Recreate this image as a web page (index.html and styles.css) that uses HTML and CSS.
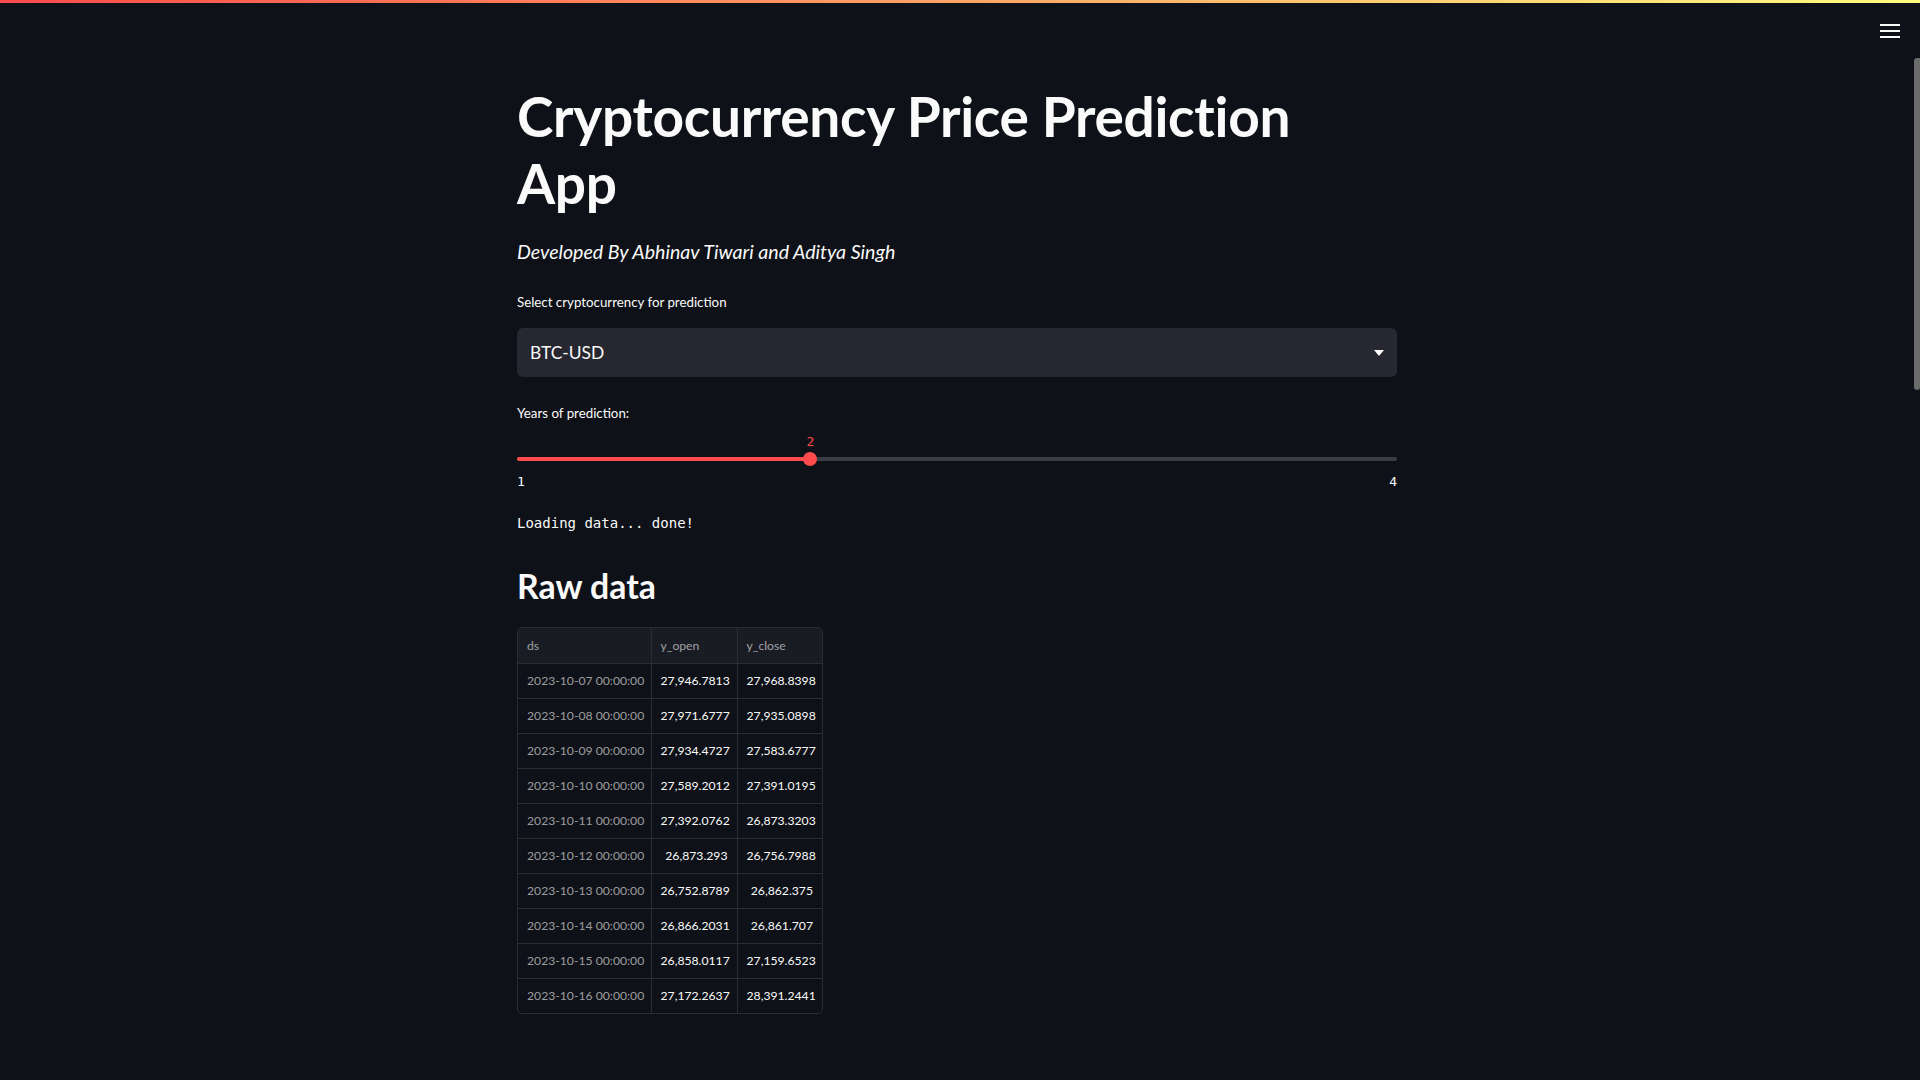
FILE: index.html
```html
<!DOCTYPE html>
<html lang="en">
<head>
<meta charset="utf-8">
<title>Cryptocurrency Price Prediction App</title>
<link rel="stylesheet" href="styles.css">
</head>
<body>
<div class="decoration"></div>
<header class="app-header">
  <button class="menu-btn" aria-label="Main menu">
    <svg width="20" height="14" viewBox="0 0 20 14"><rect x="0" y="0" width="20" height="2" fill="#fafafa"/><rect x="0" y="6" width="20" height="2" fill="#fafafa"/><rect x="0" y="12" width="20" height="2" fill="#fafafa"/></svg>
  </button>
</header>
<div class="scrollbar"></div>
<main class="main">
  <div class="block">
    <h1 class="title">Cryptocurrency Price Prediction App</h1>
    <p class="subtitle">Developed By Abhinav Tiwari and Aditya Singh</p>

    <div class="widget">
      <label class="widget-label">Select cryptocurrency for prediction</label>
      <div class="select">
        <span class="select-value">BTC-USD</span>
        <svg class="select-arrow" width="10" height="6" viewBox="0 0 10 6"><path d="M0 0 L10 0 L5 6 Z" fill="#fafafa"/></svg>
      </div>
    </div>

    <div class="widget slider-widget">
      <label class="widget-label">Years of prediction:</label>
      <div class="slider">
        <div class="slider-track">
          <div class="slider-fill" style="width: 33.333%"></div>
          <div class="slider-thumb" style="left: 33.333%">
            <span class="slider-value">2</span>
          </div>
        </div>
        <div class="slider-ticks"><span>1</span><span>4</span></div>
      </div>
    </div>

    <pre class="code-text">Loading data... done!</pre>

    <h2 class="subheader">Raw data</h2>

    <div class="table-wrap">
      <table class="data-table">
        <colgroup><col class="w-ds"><col class="w-open"><col class="w-close"></colgroup>
        <thead>
          <tr><th class="c-ds">ds</th><th class="c-num">y_open</th><th class="c-num">y_close</th></tr>
        </thead>
        <tbody>
          <tr><td class="c-ds">2023-10-07 00:00:00</td><td class="c-num">27,946.7813</td><td class="c-num">27,968.8398</td></tr>
          <tr><td class="c-ds">2023-10-08 00:00:00</td><td class="c-num">27,971.6777</td><td class="c-num">27,935.0898</td></tr>
          <tr><td class="c-ds">2023-10-09 00:00:00</td><td class="c-num">27,934.4727</td><td class="c-num">27,583.6777</td></tr>
          <tr><td class="c-ds">2023-10-10 00:00:00</td><td class="c-num">27,589.2012</td><td class="c-num">27,391.0195</td></tr>
          <tr><td class="c-ds">2023-10-11 00:00:00</td><td class="c-num">27,392.0762</td><td class="c-num">26,873.3203</td></tr>
          <tr><td class="c-ds">2023-10-12 00:00:00</td><td class="c-num">26,873.293</td><td class="c-num">26,756.7988</td></tr>
          <tr><td class="c-ds">2023-10-13 00:00:00</td><td class="c-num">26,752.8789</td><td class="c-num">26,862.375</td></tr>
          <tr><td class="c-ds">2023-10-14 00:00:00</td><td class="c-num">26,866.2031</td><td class="c-num">26,861.707</td></tr>
          <tr><td class="c-ds">2023-10-15 00:00:00</td><td class="c-num">26,858.0117</td><td class="c-num">27,159.6523</td></tr>
          <tr><td class="c-ds">2023-10-16 00:00:00</td><td class="c-num">27,172.2637</td><td class="c-num">28,391.2441</td></tr>
        </tbody>
      </table>
    </div>
  </div>
</main>
</body>
</html>
```
FILE: styles.css
```css
* { box-sizing: border-box; }
html, body {
  margin: 0;
  padding: 0;
  background: #0e1117;
  color: #fafafa;
  font-family: Lato, "Noto Sans", "Liberation Sans", sans-serif;
  height: 1080px;
  overflow: hidden;
}
.decoration {
  position: fixed;
  top: 0; left: 0; right: 0;
  height: 3px;
  background: linear-gradient(90deg, #ff4b4b, #fffd80);
  z-index: 10;
}
.app-header {
  position: fixed;
  top: 0; right: 0;
  height: 60px;
  padding: 0 20px 0 0;
  display: flex;
  align-items: flex-start;
}
.menu-btn {
  margin-top: 24px;
  background: none;
  border: 0;
  padding: 0;
  width: 20px;
  height: 14px;
  display: block;
  cursor: pointer;
}
.menu-btn svg { display: block; }
.scrollbar {
  position: fixed;
  right: 0;
  top: 58px;
  width: 6px;
  height: 332px;
  background: #6b6b6b;
  border-radius: 3px 0 3px 3px;
}
.main {
  display: flex;
  justify-content: center;
  padding-right: 6px;
}
.block {
  width: 880px;
  padding-top: 83px;
}
.title {
  margin: 0;
  font-size: 55px;
  line-height: 67px;
  font-weight: 700;
  letter-spacing: -0.3px;
}
.subtitle {
  margin: 20px 0 0;
  font-size: 19.6px;
  line-height: 30px;
  font-style: italic;
}
.widget { margin-top: 25px; }
.widget-label {
  display: block;
  font-size: 13.3px;
  line-height: 20px;
}
.select {
  margin-top: 16px;
  height: 49px;
  background: #262730;
  border-radius: 6px;
  display: flex;
  align-items: center;
  justify-content: space-between;
  padding: 0 13px 0 13px;
}
.select-value { font-size: 17.4px; }
.select-arrow { display: block; }
.slider-widget { margin-top: 26px; }
.slider { padding-top: 34px; }
.slider-track {
  position: relative;
  height: 4px;
  background: #3b3d45;
  border-radius: 2px;
}
.slider-fill {
  height: 4px;
  background: #ff4b4b;
  border-radius: 2px;
}
.slider-thumb {
  position: absolute;
  top: 50%;
  width: 14px;
  height: 14px;
  margin: -7px 0 0 -7px;
  border-radius: 50%;
  background: #ff4b4b;
}
.slider-value {
  position: absolute;
  left: 50%;
  bottom: 16px;
  transform: translateX(-50%);
  color: #ff4b4b;
  font-family: "DejaVu Sans Mono", monospace;
  font-size: 13px;
  line-height: 16px;
}
.slider-ticks {
  display: flex;
  justify-content: space-between;
  margin-top: 13px;
  font-family: "DejaVu Sans Mono", monospace;
  font-size: 13px;
  line-height: 16px;
}
.code-text {
  margin: 24px 0 0;
  font-family: "DejaVu Sans Mono", monospace;
  font-size: 14px;
  line-height: 18px;
  color: #fafafa;
}
.subheader {
  margin: 31px 0 0;
  font-size: 33.8px;
  line-height: 46px;
  font-weight: 700;
}
.table-wrap {
  margin-top: 18px;
  display: inline-block;
  border: 1px solid #2b2d36;
  border-radius: 5px;
  overflow: hidden;
}
.data-table {
  border-collapse: collapse;
  table-layout: fixed;
  width: 304px;
  font-size: 12.2px;
}
.w-ds { width: 133px; }
.w-open { width: 86px; }
.w-close { width: 85px; }
.data-table th, .data-table td {
  height: 35px;
  padding: 0 9px;
  border-right: 1px solid #2b2d36;
  border-bottom: 1px solid #2b2d36;
  white-space: nowrap;
}
.data-table tr > :last-child { border-right: 0; }
.data-table tbody tr:last-child td { border-bottom: 0; }
.data-table th {
  background: #1a1c24;
  color: rgba(250, 250, 250, 0.6);
  font-weight: 400;
  text-align: left;
}
.data-table td.c-ds { color: rgba(250, 250, 250, 0.6); }
.data-table td.c-num { text-align: right; color: #fafafa; }
.data-table th.c-num { text-align: left; }
```
